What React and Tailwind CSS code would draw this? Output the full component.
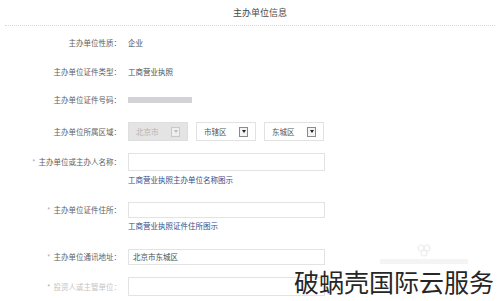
const font = { fontFamily: '"Noto Sans CJK SC", "Noto Sans", sans-serif' };

const Arrow = ({ disabled }) => (
  <span
    className={`flex h-[10px] w-[9px] items-center justify-center border ${
      disabled ? "border-[#c8c8c8] bg-[#eeeeee]" : "border-[#8a8a8a] bg-[#f4f4f4]"
    }`}
  >
    <span
      className={`h-0 w-0 border-x-[2px] border-t-[3px] border-x-transparent ${
        disabled ? "border-t-[#bbbbbb]" : "border-t-[#222222]"
      }`}
    />
  </span>
);

const Select = ({ text, disabled }) => (
  <div
    className={`flex h-[19px] w-[60px] items-center justify-between border pl-[7px] pr-[7px] ${
      disabled ? "border-[#dedede] bg-[#e4e4e4] text-[#b5b5b5]" : "border-[#e2e2e2] bg-white text-[#555555]"
    }`}
  >
    <span>{text}</span>
    <Arrow disabled={disabled} />
  </div>
);

const Row = ({ label, star, faint, className, children }) => (
  <div className={`flex items-center ${className}`}>
    <div
      className={`w-[121px] shrink-0 text-right ${faint ? "text-[#c4c4c4]" : "text-[#5e5e5e]"}`}
    >
      {star && <span className="mr-[3px] text-[#b0b0b0]">*</span>}
      {label}
    </div>
    <div className="ml-[7px] flex items-center gap-[8px] text-[#4e4e4e]">{children}</div>
  </div>
);

const Input = ({ value, h = "h-[18px]" }) => (
  <div className={`flex w-[197px] items-center border border-[#e3e3e3] bg-white px-[4px] ${h}`}>
    {value}
  </div>
);

const Hint = ({ text, className }) => (
  <div className={`ml-[128px] h-[12px] leading-[12px] text-[#3a4a86] ${className}`}>{text}</div>
);

export default function App() {
  return (
    <div className="relative h-[301px] w-[500px] overflow-hidden bg-white text-[7.5px] leading-none" style={font}>
      <div className="flex h-[25px] items-center justify-center pl-[20px] text-[9px] text-[#4a4a4a]">
        主办单位信息
      </div>
      <div className="mx-[5px] border-b border-dotted border-[#d8d8d8]" />

      <Row label="主办单位性质：" className="mt-[8px] h-[18px]">
        <span>企业</span>
      </Row>
      <Row label="主办单位证件类型：" className="mt-[11px] h-[18px]">
        <span>工商营业执照</span>
      </Row>
      <Row label="主办单位证件号码：" className="mt-[10px] h-[18px]">
        <span className="h-[6px] w-[64px] bg-[#d2d2d7]" />
      </Row>
      <Row label="主办单位所属区域：" className="mt-[13px] h-[19px]">
        <Select text="北京市" disabled />
        <Select text="市辖区" />
        <Select text="东城区" />
      </Row>
      <Row label="主办单位或主办人名称：" star className="mt-[12px] h-[18px]">
        <Input />
      </Row>
      <Hint text="工商营业执照主办单位名称图示" className="mt-[3px]" />
      <Row label="主办单位证件住所：" star className="mt-[16px] h-[16px]">
        <Input h="h-[16px]" />
      </Row>
      <Hint text="工商营业执照证件住所图示" className="mt-[2px]" />
      <Row label="主办单位通讯地址：" star className="mt-[17px] h-[16px]">
        <Input h="h-[16px]" value="北京市东城区" />
      </Row>
      <Row label="投资人或主管单位：" star faint className="mt-[12px] h-[19px]">
        <Input h="h-[19px]" />
      </Row>

      {/* watermark */}
      <div className="absolute left-[378px] top-[243px] flex w-[92px] flex-col items-center">
        <svg width="16" height="14" viewBox="0 0 16 14" fill="none" stroke="#ececec" strokeWidth="1.2">
          <circle cx="5" cy="5" r="3" />
          <circle cx="11" cy="5" r="3" />
          <circle cx="8" cy="10" r="3" />
        </svg>
        <div className="mt-[2px] h-[5px] w-[88px] bg-[#f4f4f4]" />
      </div>
      <div className="absolute left-[294px] top-[266px] text-[25px] leading-[30px] text-[#262626]">
        破蜗壳国际云服务
      </div>
    </div>
  );
}
